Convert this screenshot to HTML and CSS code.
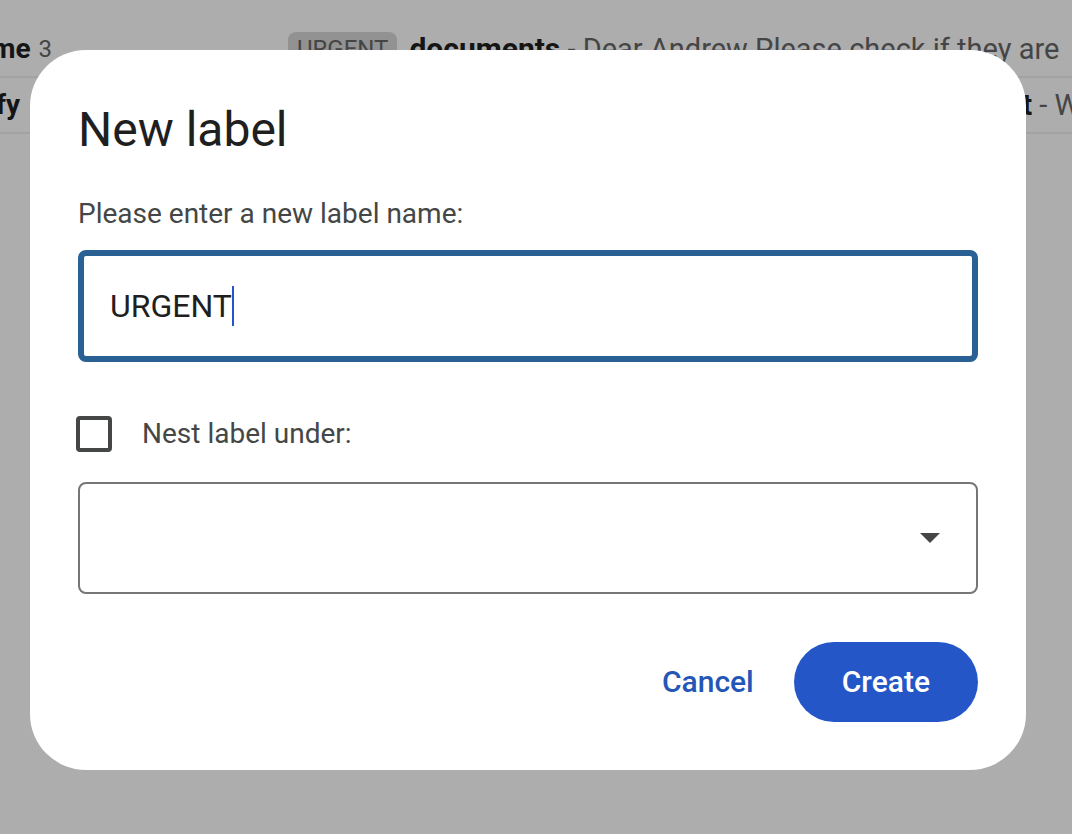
FILE: index.html
```html
<!DOCTYPE html>
<html lang="en">
<head>
  <meta charset="utf-8">
  <meta name="viewport" content="width=device-width, initial-scale=1">
  <title>New label</title>
  <link rel="stylesheet" href="styles.css">
</head>
<body>
  <main class="inbox">
    <div class="mail">
      <div class="sender"><b>me</b> <span class="count">3</span></div>
      <div class="message"><span class="chip">URGENT</span><span class="summary"><b>documents</b> - Dear Andrew Please check if they are</span></div>
    </div>
    <div class="mail">
      <div class="sender sender-short"><b>fy</b></div>
      <div class="message message-end"><span class="summary"><b>t</b> - W</span></div>
    </div>
  </main>

  <div class="scrim">
    <form class="dialog" role="dialog" aria-modal="true" aria-labelledby="dialog-title">
      <h1 class="title" id="dialog-title">New label</h1>
      <label class="caption" for="label-name">Please enter a new label name:</label>
      <label class="field" for="label-name">
        <input class="field-input" id="label-name" type="text" value="URGENT">
        <span class="caret"></span>
      </label>
      <div class="nest">
        <input class="tick" id="nest" type="checkbox">
        <label for="nest">Nest label under:</label>
      </div>
      <div class="picker">
        <select class="picker-select" aria-label="Parent label"><option></option></select>
        <svg class="picker-arrow" viewBox="0 0 20 10" aria-hidden="true"><path d="M0 0h20L10 10z"/></svg>
      </div>
      <div class="actions">
        <button class="button" type="button">Cancel</button>
        <button class="button button-primary" type="button">Create</button>
      </div>
    </form>
  </div>
</body>
</html>
```

FILE: styles.css
```css
* {
  box-sizing: border-box;
}

body {
  margin: 0;
  min-height: 100vh;
  overflow: hidden;
  background: #fff;
  color: #666;
  font: 28px/40px Roboto, "Liberation Sans", sans-serif;
}

b {
  color: #1f1f1f;
  font-weight: 700;
}

.inbox {
  padding-top: 22px;
}

.mail {
  display: flex;
  justify-content: space-between;
  height: 56px;
  padding-top: 7px;
  border-bottom: 2px solid #eceff1;
  white-space: nowrap;
  overflow: hidden;
}

.sender {
  display: flex;
  justify-content: flex-end;
  gap: 8px;
  width: 52px;
}

.sender-short {
  width: 20px;
}

.count {
  font-size: 24px;
}

.message {
  display: flex;
  align-items: center;
  gap: 12px;
  width: 784px;
  height: 40px;
}

.message-end {
  width: 50px;
}

.summary {
  font-size: 29px;
}

.summary b {
  font-size: 30px;
}

.chip {
  padding: 0 9px;
  border-radius: 8px;
  background: #d7d7d7;
  font-size: 24px;
  line-height: 34px;
}

.scrim {
  position: fixed;
  inset: 0;
  padding: 50px 46px 50px 30px;
  background: rgba(0, 0, 0, 0.32);
  overflow: auto;
}

.dialog {
  display: flex;
  flex-direction: column;
  padding: 48px;
  border-radius: 56px;
  background: #fff;
  color: #444746;
}

.title {
  margin: 0 0 32px;
  color: #1f1f1f;
  font-size: 48px;
  font-weight: 400;
  line-height: 64px;
}

.caption {
  margin-bottom: 16px;
}

.field {
  display: flex;
  align-items: center;
  height: 112px;
  padding: 0 26px;
  border: 6px solid #296195;
  border-radius: 8px;
  cursor: text;
}

.field-input {
  field-sizing: content;
  max-width: 100%;
  padding: 0;
  border: 0;
  outline: 0;
  background: none;
  color: #1f1f1f;
  font: inherit;
  font-size: 32px;
}

.caret {
  width: 2px;
  height: 40px;
  background: #2456c8;
}

.field:focus-within .caret {
  visibility: hidden;
}

.nest {
  display: flex;
  align-items: center;
  gap: 30px;
  height: 36px;
  margin: 54px 0 30px -2px;
}

.tick {
  appearance: none;
  width: 36px;
  height: 36px;
  margin: 0;
  border: 4px solid #444746;
  border-radius: 4px;
}

.tick:checked {
  background: #444746;
}

.picker {
  display: grid;
  align-items: center;
}

.picker-select,
.picker-arrow {
  grid-area: 1 / 1;
}

.picker-select {
  appearance: none;
  width: 100%;
  height: 112px;
  padding: 0 72px 0 30px;
  border: 2px solid #747775;
  border-radius: 8px;
  background: #fff;
  color: #1f1f1f;
  font: inherit;
}

.picker-arrow {
  justify-self: end;
  width: 20px;
  height: 10px;
  margin-right: 38px;
  fill: #444746;
  pointer-events: none;
}

.actions {
  display: flex;
  justify-content: flex-end;
  gap: 16px;
  margin-top: 48px;
}

.button {
  height: 80px;
  padding: 0 24px;
  border: 0;
  border-radius: 40px;
  background: none;
  color: #2456b8;
  font: inherit;
  font-size: 30px;
  font-weight: 500;
}

.button-primary {
  padding: 0 48px;
  background: #2456c8;
  color: #fff;
}
```
